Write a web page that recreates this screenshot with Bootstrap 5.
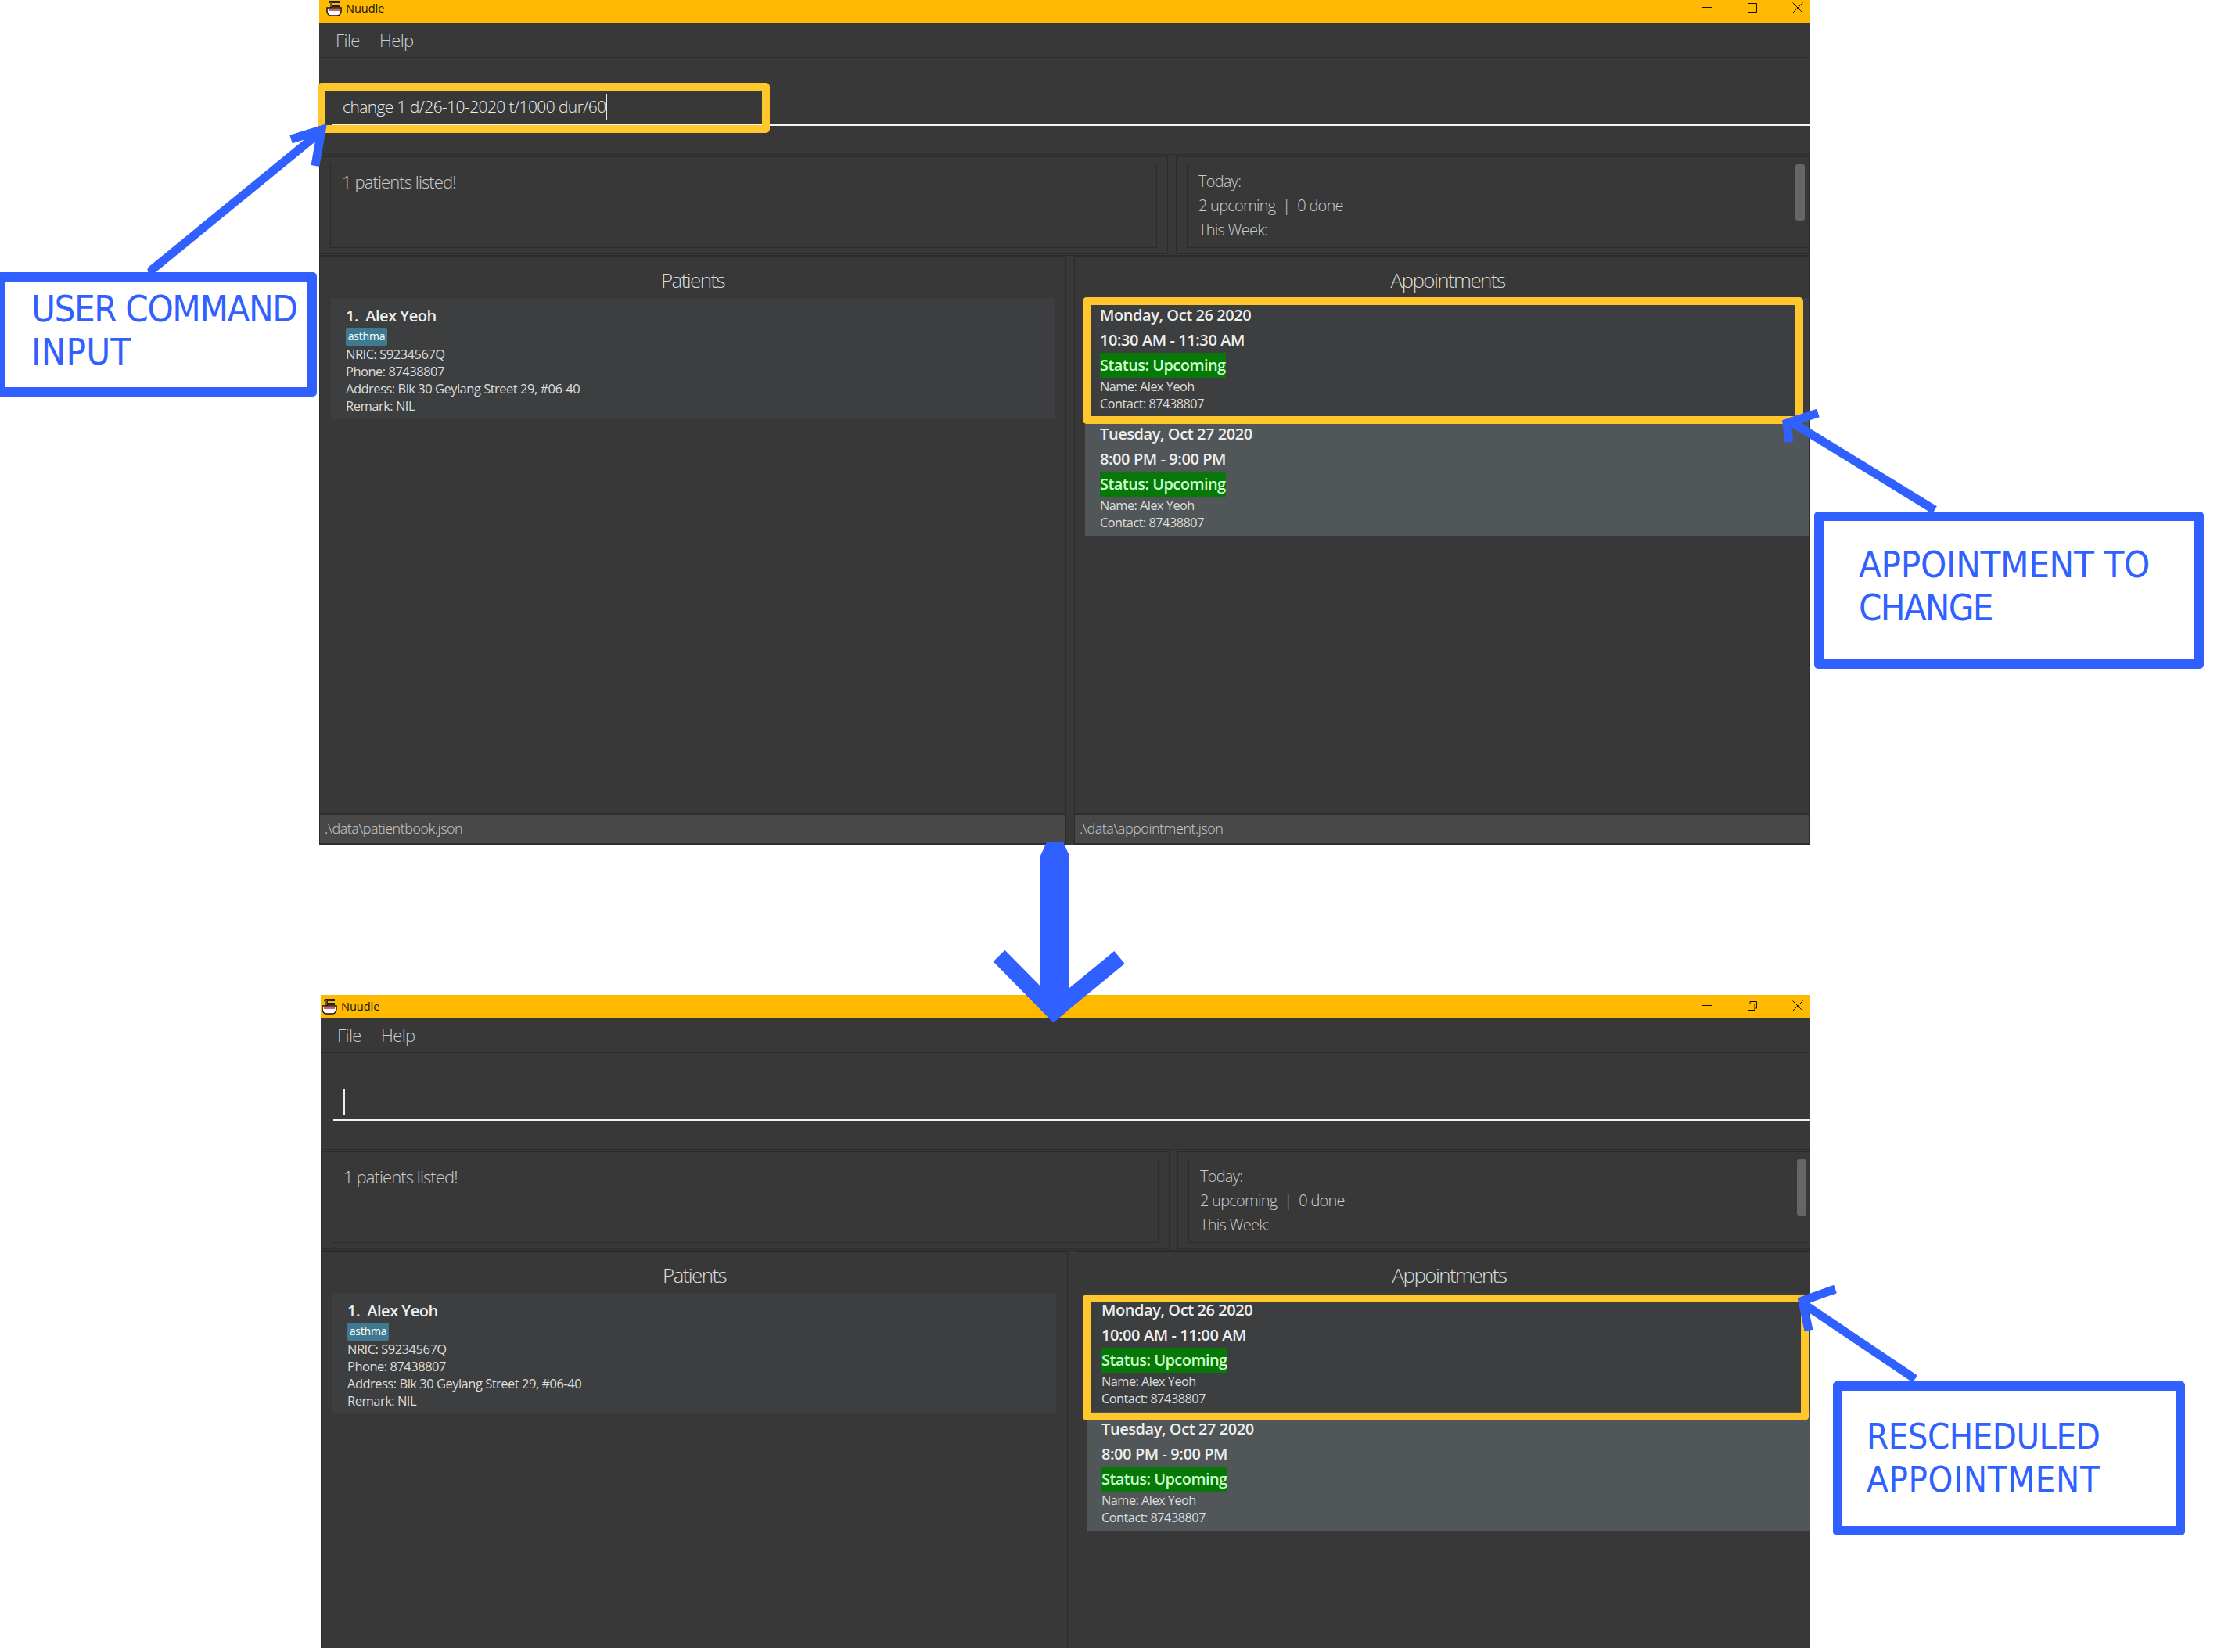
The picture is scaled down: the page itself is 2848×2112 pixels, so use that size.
<!DOCTYPE html>
<html lang="en"><head><meta charset="utf-8"><title>Nuudle</title>
<link href="https://cdn.jsdelivr.net/npm/bootstrap@5.3.0/dist/css/bootstrap.min.css" rel="stylesheet">
<style>
html,body{background:#fff;margin:0;padding:0}
.canvas{position:relative;width:2848px;height:2112px;overflow:hidden;background:#fff;font-family:"Open Sans","Noto Sans",sans-serif}
.win{position:absolute;background:#383838;overflow:hidden;color:#ccc;font-weight:300}
.win-a{left:408px;top:0;width:1906px;height:1080px}
.win-b{left:410px;top:1272px;width:1904px;height:835px}
.titlebar{height:29px;flex:none;background:#ffb900;color:#111;font-size:14.5px;font-weight:400;line-height:20px}
.win-a .titlebar{padding-left:9px}.win-b .titlebar{padding-left:1px}
.win-a .brand{margin-bottom:8px}
.appicon{width:20px;height:21px;margin-right:5px;flex:none}
.ctrl{width:58px;height:29px;flex:none}
.ctrls{margin-right:-13px}
.win-body{width:1906px;flex:none}
.win-body>*{flex:none}
.menubar{height:45px;padding-left:21px;gap:25px;border-bottom:1px solid #2c2c2c;font-size:22px;letter-spacing:-.55px;line-height:44px}
.cmdpane{height:124px;padding-left:16px;border-bottom:1px solid #2c2c2c}
.cmdfield{height:57px;margin-top:30px;padding-left:14px;border-bottom:2px solid #f4f4f4;font-size:21px;letter-spacing:-.6px;color:#eee;line-height:64px;white-space:nowrap}
.caret-bar{display:inline-block;width:1px;height:33px;background:#eee;vertical-align:-9px}
.win-b .caret-bar{width:2px;margin-left:-1px}
.results{height:127px;margin-top:2px;gap:10px;border-bottom:1px solid #2c2c2c}
.respane{border:1px solid #2c2c2c;padding:7px 13px;height:125px}
.respane-l{width:1085px;flex:none}
.resbox{border:1px solid #2c2c2c;height:100%;padding:7px 14px;font-size:20px;letter-spacing:-.75px;line-height:31px;white-space:pre}
.respane-l .resbox{font-size:22px;letter-spacing:-.9px;padding-top:8px}
.respane-r{padding-right:0;position:relative;flex:1}
.thumb{position:absolute;right:6px;top:9px;width:12px;height:72px;background:#666;border-radius:3px}
.lists{height:753px;gap:10px}
.listcol{border:1px solid #2c2c2c;border-bottom:0;min-width:0}
.listcol-l{width:955px;flex:none}
.listhead{height:53px;font-size:26px;letter-spacing:-1.6px;line-height:61px;text-align:center;color:#ddd}
.listhead-r{padding-left:14px}
.listbody{padding-left:14px;flex:1}
.listcol-l .listbody{padding-right:14px}
.listbody-r{padding-left:13px}
.pcard{height:155px;background:#3c3e3f;padding:11px 19px;font-size:16.5px;line-height:22px;font-weight:400;letter-spacing:-.5px;color:#ddd}
.pname{font-size:20px;font-weight:600;line-height:23px;letter-spacing:-.5px;color:#eee;white-space:pre}
.ptag{display:block;width:53px;height:23px;margin:4px 0 0;padding:0;background:#3e7b91;border-radius:2px;font-size:14px;font-weight:400;line-height:22px;color:#fff;letter-spacing:-.2px;text-align:center}
.acard{height:152px;padding:6px 19px 0;font-weight:400;font-size:16.3px;line-height:22px;letter-spacing:-.5px;color:#ddd}
.acard-1{background:#3c3e3f}.acard-2{background:#515658}
.aline{font-size:20px;font-weight:600;line-height:32px;height:32px;letter-spacing:-.42px;color:#eee;white-space:nowrap}
.astatus{display:block;width:161px;height:32px;margin:0;padding:0;border-radius:0;background:#077707;color:#c8ffc8;font-size:20px;font-weight:600;line-height:32px;letter-spacing:-.55px;text-align:left}
.status-bar{background:#484848;border-top:2px solid #2e2e2e;border-bottom:2px solid #2e2e2e;box-sizing:content-box;font-size:18px;letter-spacing:-.5px;line-height:34px;padding-left:6px;color:#ccc;height:36px}
.hl{position:absolute;border:10px solid #ffc72c;border-radius:5px;pointer-events:none}
.hl-cmd{left:406px;top:106px;width:578px;height:64px}
.hl-a1{left:1384px;top:380px;width:921px;height:162px}
.hl-a2{left:1384px;top:1655px;width:928px;height:161px}
.arrows{position:absolute;left:0;top:0;pointer-events:none}
.note{position:absolute;border:12px solid #3060ff;border-radius:5px;background:#fff;color:#3060ff;font-family:"DejaVu Sans",sans-serif;font-stretch:condensed;font-weight:400;white-space:nowrap}
.note span{display:block}
.note-user{left:-6px;top:348px;width:411px;height:159px;padding:7px 0 0 34px;font-size:47px;line-height:55px;letter-spacing:-1.4px}
.note-user .wide{letter-spacing:.2px}
.note-chg{left:2319px;top:654px;width:498px;height:201px;padding:28px 0 0 45px;font-size:47px;line-height:55px;letter-spacing:-.3px}
.note-chg .tight{letter-spacing:-1.8px}
.note-res{left:2343px;top:1766px;width:450px;height:197px;padding:31px 0 0 31px;font-size:45px;line-height:55px;letter-spacing:-.5px}
.note-res .tight{letter-spacing:.7px}
</style></head><body>
<div class="canvas">

<div class="win win-a d-flex flex-column">
 <div class="titlebar d-flex align-items-center">
  <svg class="appicon brand" viewBox="0 0 20 21"><path d="M4 1h13v3H8v2h9v3H8v2H5V4H3z" fill="#222"/><path d="M6 2v9" stroke="#8a6a20" stroke-width="1.5"/><path d="M1 10h18v4c0 3-2 6-5 6H6c-3 0-5-3-5-6z" fill="#fff" stroke="#111" stroke-width="1.5"/><path d="M3 12h14v2H3z" fill="#e05a6a"/></svg>
  <span class="brand">Nuudle</span>
  <div class="ctrls ms-auto d-flex">
   <svg class="ctrl" viewBox="0 0 58 29"><path d="M23 9.5h12" stroke="#111" stroke-width="1"/></svg>
   <svg class="ctrl" viewBox="0 0 58 29"><path d="M23.5 4.500h11v11h-11z" fill="none" stroke="#111"/></svg>
   <svg class="ctrl" viewBox="0 0 58 29"><path d="M22.500 3.500l13 13m0-13l-13 13" stroke="#111" fill="none"/></svg>
  </div>
 </div>
 <div class="win-body d-flex flex-column">
  <div class="menubar d-flex"><span>File</span><span>Help</span></div>
  <div class="cmdpane"><div class="cmdfield">change 1 d/26-10-2020 t/1000 dur/60<span class="caret-bar"></span></div></div>
  <div class="results d-flex">
   <div class="respane respane-l"><div class="resbox">1 patients listed!</div></div>
   <div class="respane respane-r"><div class="resbox">Today:
2 upcoming  |  0 done
This Week:</div><div class="thumb"></div></div>
  </div>
  <div class="lists d-flex">
   <div class="listcol listcol-l d-flex flex-column">
    <div class="listhead">Patients</div>
    <div class="listbody">
     <div class="pcard"><div class="pname">1.  Alex Yeoh</div><span class="badge ptag">asthma</span><div>NRIC: S9234567Q</div><div>Phone: 87438807</div><div>Address: Blk 30 Geylang Street 29, #06-40</div><div>Remark: NIL</div></div>
    </div>
    <div class="status-bar">.\data\patientbook.json</div>
   </div>
   <div class="listcol flex-grow-1 d-flex flex-column">
    <div class="listhead listhead-r">Appointments</div>
    <div class="listbody listbody-r">
     <div class="acard acard-1"><div class="aline">Monday, Oct 26 2020</div><div class="aline">10:30 AM - 11:30 AM</div><span class="badge astatus">Status: Upcoming</span><div>Name: Alex Yeoh</div><div>Contact: 87438807</div></div>
     <div class="acard acard-2"><div class="aline">Tuesday, Oct 27 2020</div><div class="aline">8:00 PM - 9:00 PM</div><span class="badge astatus">Status: Upcoming</span><div>Name: Alex Yeoh</div><div>Contact: 87438807</div></div>
    </div>
    <div class="status-bar">.\data\appointment.json</div>
   </div>
  </div>
 </div>
</div>

<div class="win win-b d-flex flex-column">
 <div class="titlebar d-flex align-items-center">
  <svg class="appicon" viewBox="0 0 20 21"><path d="M4 1h13v3H8v2h9v3H8v2H5V4H3z" fill="#222"/><path d="M6 2v9" stroke="#8a6a20" stroke-width="1.5"/><path d="M1 10h18v4c0 3-2 6-5 6H6c-3 0-5-3-5-6z" fill="#fff" stroke="#111" stroke-width="1.5"/><path d="M3 12h14v2H3z" fill="#e05a6a"/></svg>
  <span>Nuudle</span>
  <div class="ctrls ms-auto d-flex">
   <svg class="ctrl" viewBox="0 0 58 29"><path d="M23 13.500h12" stroke="#111" stroke-width="1"/></svg>
   <svg class="ctrl" viewBox="0 0 58 29"><path d="M23.500 11.500h8.500v8h-8.500zM26 11.500v-3h8.500v8.500h-2.500" fill="none" stroke="#111"/></svg>
   <svg class="ctrl" viewBox="0 0 58 29"><path d="M22.500 7.500l13 13m0-13l-13 13" stroke="#111" fill="none"/></svg>
  </div>
 </div>
 <div class="win-body d-flex flex-column">
  <div class="menubar d-flex"><span>File</span><span>Help</span></div>
  <div class="cmdpane"><div class="cmdfield"><span class="caret-bar"></span></div></div>
  <div class="results d-flex">
   <div class="respane respane-l"><div class="resbox">1 patients listed!</div></div>
   <div class="respane respane-r"><div class="resbox">Today:
2 upcoming  |  0 done
This Week:</div><div class="thumb"></div></div>
  </div>
  <div class="lists d-flex">
   <div class="listcol listcol-l d-flex flex-column">
    <div class="listhead">Patients</div>
    <div class="listbody">
     <div class="pcard"><div class="pname">1.  Alex Yeoh</div><span class="badge ptag">asthma</span><div>NRIC: S9234567Q</div><div>Phone: 87438807</div><div>Address: Blk 30 Geylang Street 29, #06-40</div><div>Remark: NIL</div></div>
    </div>
   </div>
   <div class="listcol flex-grow-1 d-flex flex-column">
    <div class="listhead listhead-r">Appointments</div>
    <div class="listbody listbody-r">
     <div class="acard acard-1"><div class="aline">Monday, Oct 26 2020</div><div class="aline">10:00 AM - 11:00 AM</div><span class="badge astatus">Status: Upcoming</span><div>Name: Alex Yeoh</div><div>Contact: 87438807</div></div>
     <div class="acard acard-2"><div class="aline">Tuesday, Oct 27 2020</div><div class="aline">8:00 PM - 9:00 PM</div><span class="badge astatus">Status: Upcoming</span><div>Name: Alex Yeoh</div><div>Contact: 87438807</div></div>
    </div>
   </div>
  </div>
 </div>
</div>

<div class="hl hl-cmd"></div>
<div class="hl hl-a1"></div>
<div class="hl hl-a2"></div>

<div class="note note-user"><span>USER COMMAND</span><span class="wide">INPUT</span></div>
<div class="note note-chg"><span>APPOINTMENT TO</span><span class="tight">CHANGE</span></div>
<div class="note note-res"><span>RESCHEDULED</span><span class="tight">APPOINTMENT</span></div>

<svg class="arrows" width="2848" height="2112" viewBox="0 0 2848 2112" fill="none" stroke="#3060ff">
 <g stroke-width="11">
  <path d="M194 345L408 170" stroke-linecap="round"/><path d="M372 178L411 166L403 212"/>
  <path d="M2473 652L2287 538"/><path d="M2324 528L2284 541L2287 565"/>
  <path d="M2448 1763L2307 1668"/><path d="M2346 1648L2304 1663L2312 1701"/>
 </g>
 <path d="M1348.500 1094V1290" stroke-width="37" stroke-linecap="butt"/>
 <path d="M1330 1094l8-18h21l8 18z" fill="#3060ff" stroke="none"/>
 <path d="M1277 1222L1347 1293L1431 1224" stroke-width="21"/>
 <path d="M1332 1280l15 27l18-15z" fill="#3060ff" stroke="none"/>
</svg>
</div>
<script src="https://cdn.jsdelivr.net/npm/bootstrap@5.3.0/dist/js/bootstrap.bundle.min.js"></script>
</body></html>
